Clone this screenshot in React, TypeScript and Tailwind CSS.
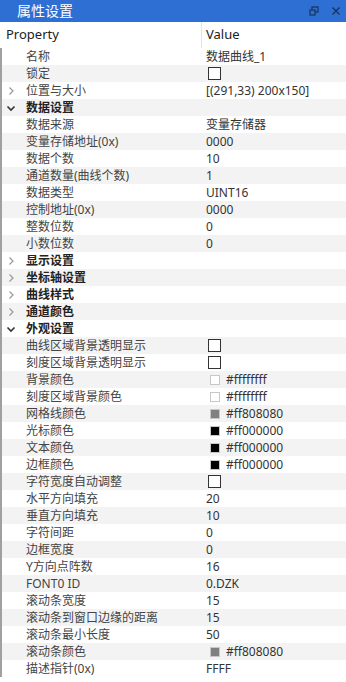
import React from 'react';

type Row =
  | { kind: 'cat'; label: string; open: boolean }
  | { kind: 'prop'; label: string; value?: string; check?: boolean; color?: string; expand?: boolean };

const rows: Row[] = [
  { kind: 'prop', label: '名称', value: '数据曲线_1' },
  { kind: 'prop', label: '锁定', check: true },
  { kind: 'prop', label: '位置与大小', value: '[(291,33) 200x150]', expand: true },
  { kind: 'cat', label: '数据设置', open: true },
  { kind: 'prop', label: '数据来源', value: '变量存储器' },
  { kind: 'prop', label: '变量存储地址(0x)', value: '0000' },
  { kind: 'prop', label: '数据个数', value: '10' },
  { kind: 'prop', label: '通道数量(曲线个数)', value: '1' },
  { kind: 'prop', label: '数据类型', value: 'UINT16' },
  { kind: 'prop', label: '控制地址(0x)', value: '0000' },
  { kind: 'prop', label: '整数位数', value: '0' },
  { kind: 'prop', label: '小数位数', value: '0' },
  { kind: 'cat', label: '显示设置', open: false },
  { kind: 'cat', label: '坐标轴设置', open: false },
  { kind: 'cat', label: '曲线样式', open: false },
  { kind: 'cat', label: '通道颜色', open: false },
  { kind: 'cat', label: '外观设置', open: true },
  { kind: 'prop', label: '曲线区域背景透明显示', check: true },
  { kind: 'prop', label: '刻度区域背景透明显示', check: true },
  { kind: 'prop', label: '背景颜色', value: '#ffffffff', color: '#ffffff' },
  { kind: 'prop', label: '刻度区域背景颜色', value: '#ffffffff', color: '#ffffff' },
  { kind: 'prop', label: '网格线颜色', value: '#ff808080', color: '#808080' },
  { kind: 'prop', label: '光标颜色', value: '#ff000000', color: '#000000' },
  { kind: 'prop', label: '文本颜色', value: '#ff000000', color: '#000000' },
  { kind: 'prop', label: '边框颜色', value: '#ff000000', color: '#000000' },
  { kind: 'prop', label: '字符宽度自动调整', check: true },
  { kind: 'prop', label: '水平方向填充', value: '20' },
  { kind: 'prop', label: '垂直方向填充', value: '10' },
  { kind: 'prop', label: '字符间距', value: '0' },
  { kind: 'prop', label: '边框宽度', value: '0' },
  { kind: 'prop', label: 'Y方向点阵数', value: '16' },
  { kind: 'prop', label: 'FONT0 ID', value: '0.DZK' },
  { kind: 'prop', label: '滚动条宽度', value: '15' },
  { kind: 'prop', label: '滚动条到窗口边缘的距离', value: '15' },
  { kind: 'prop', label: '滚动条最小长度', value: '50' },
  { kind: 'prop', label: '滚动条颜色', value: '#ff808080', color: '#808080' },
  { kind: 'prop', label: '描述指针(0x)', value: 'FFFF' },
];

const Chevron = ({ open }: { open: boolean }) =>
  open ? (
    <svg width="10" height="10" viewBox="0 0 10 10" className="text-[#333]">
      <path d="M1.5 3.5 L5 7 L8.5 3.5" fill="none" stroke="currentColor" strokeWidth="1.6" />
    </svg>
  ) : (
    <svg width="10" height="10" viewBox="0 0 10 10" className="text-[#999]">
      <path d="M3.5 1.5 L7 5 L3.5 8.5" fill="none" stroke="currentColor" strokeWidth="1.2" />
    </svg>
  );

export default function App() {
  return (
    <div
      className="w-[346px] h-[682px] bg-white overflow-hidden flex flex-col"
      style={{ fontFamily: '"Noto Sans", "Noto Sans CJK SC", sans-serif' }}
    >
      {/* title bar */}
      <div className="h-[22px] bg-[#2d6fd2] flex items-center pl-[17px] pr-[4px]">
        <span className="text-white text-[14px] leading-none flex-1">属性设置</span>
        <svg width="10" height="10" viewBox="0 0 10 10" className="text-[#1c3664] mr-[12px]">
          <rect x="3" y="1" width="6" height="5" fill="none" stroke="currentColor" strokeWidth="1.3" />
          <rect x="1" y="4" width="5" height="5" fill="#2d6fd2" stroke="currentColor" strokeWidth="1.3" />
        </svg>
        <svg width="10" height="10" viewBox="0 0 10 10" className="text-[#1c3664] mr-[1px]">
          <path d="M1.5 1.5 L8.5 8.5 M8.5 1.5 L1.5 8.5" stroke="currentColor" strokeWidth="1.5" />
        </svg>
      </div>

      {/* header */}
      <div className="h-[26px] flex items-center text-[13px] text-[#222]">
        <div className="w-[202px] h-full flex items-center pl-[6px] border-r border-[#e4e4e4]">Property</div>
        <div className="flex-1 pl-[4px]">Value</div>
      </div>

      {/* rows */}
      <div className="border-l-2 border-[#a0a0a0] flex flex-col">
        {rows.map((r, i) => (
          <div
            key={i}
            className={`h-[17px] flex items-center text-[12px] leading-none ${i % 2 === 1 ? 'bg-[#f3f3f3]' : 'bg-white'}`}
          >
            <div className="w-[200px] flex items-center">
              <div className="w-[24px] flex justify-center pr-[6px]">
                {r.kind === 'cat' ? <Chevron open={r.open} /> : r.expand ? <Chevron open={false} /> : null}
              </div>
              <span className={r.kind === 'cat' ? 'font-bold text-[#222]' : 'text-[#444]'}>{r.label}</span>
            </div>
            {r.kind === 'prop' && (
              <div className="flex-1 flex items-center pl-[4px] text-[#333]">
                {r.check ? (
                  <span className="w-[13px] h-[13px] border border-[#333] bg-white ml-[2px]" />
                ) : r.color ? (
                  <>
                    <span
                      className="w-[10px] h-[10px] border border-[#c8c8c8] mr-[6px] ml-[4px]"
                      style={{ backgroundColor: r.color }}
                    />
                    <span>{r.value}</span>
                  </>
                ) : (
                  <span>{r.value}</span>
                )}
              </div>
            )}
          </div>
        ))}
      </div>
    </div>
  );
}
